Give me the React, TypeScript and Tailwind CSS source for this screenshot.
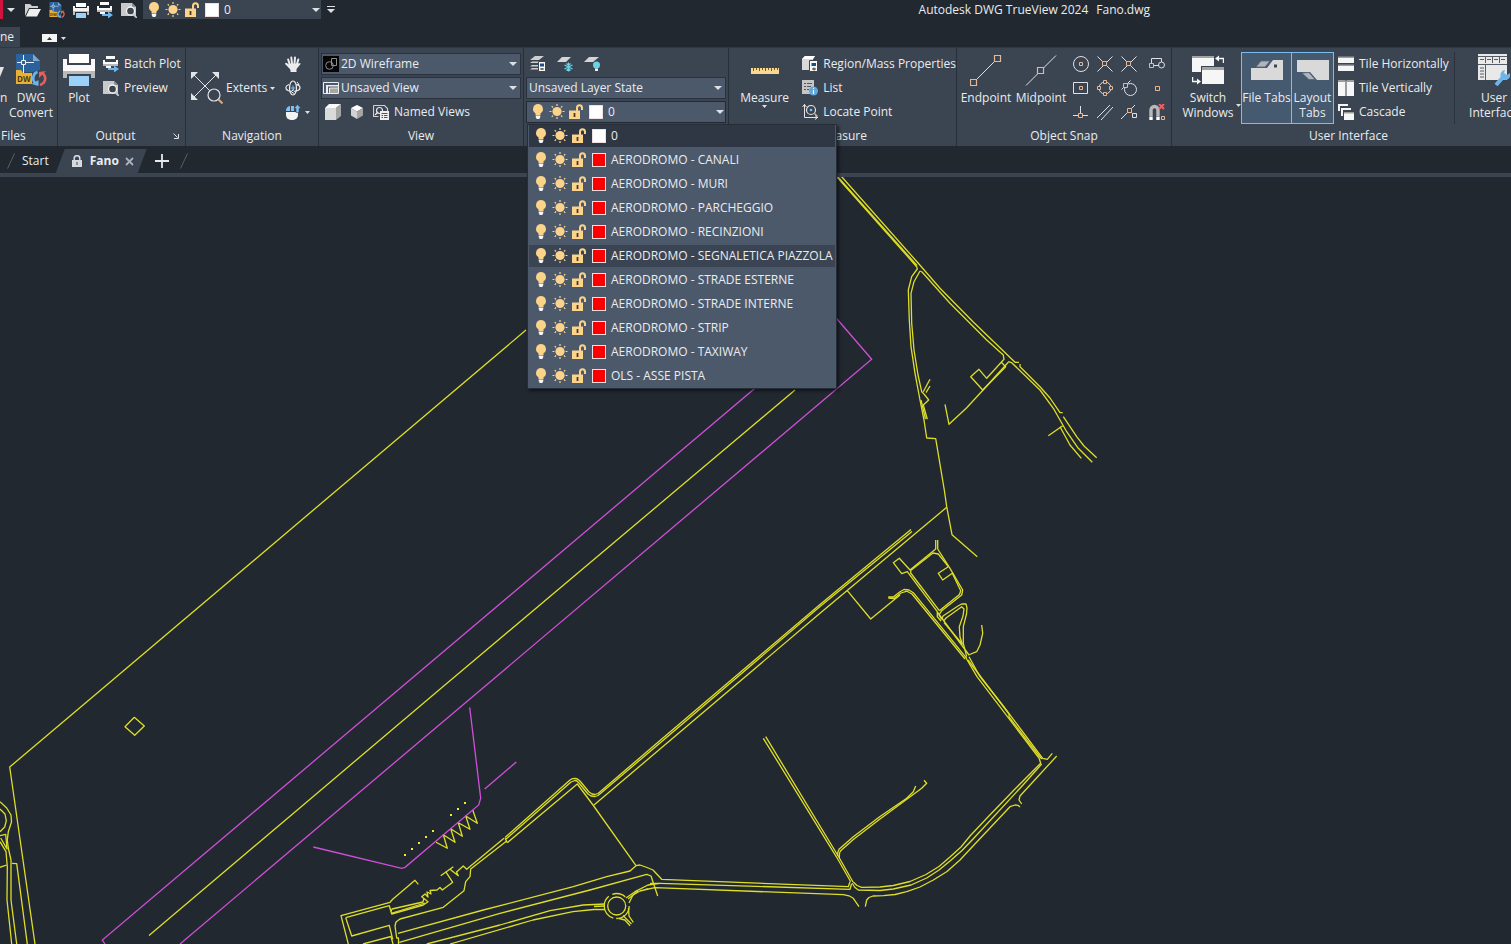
import React from "react";
import clsx from "clsx";

const yellowLines = [
  // perimeter and runway axis
  "35,944 9.7,767 89,700 526,330",
  "134.3,717.3 144.3,726 134.7,735.3 125,726.7 134.3,717.3",
  "149,935.5 300,807.7 439,690 795,390",
  // west roundabout
  "0,801.7 6.7,808 11,815 11.5,822 8.3,831.7 7.3,840 8.3,848 11,860 11,900 16.7,944",
  "0,809 5,814 6.3,820.7 4.7,827 0,831.7",
  "0,835.7 5.7,834.3 7,849 0.7,838",
  "0,841.7 6,851.7 7.3,866.7 7,900 11.7,944",
  "0,867.3 6.7,865",
  "12,863.3 16.7,863.7 27.3,944",
  // north east road
  "841.7,176.7 918.3,263.3 940,288.3 973,321.7 1015,362.3 1019,362.3",
  "1020,364 1020,366.7 1040,386.7 1050,398 1060,412.7 1062.7,412.7",
  "1063.3,416.7 1076.7,436.7 1084,446 1096.7,457.7",
  "837,177 916.7,266.7 917.3,269 911.7,276.7 908.3,290 909.3,320 911,346.7 915,373.3 920,400 924,420 926.7,438 935.7,438.7 944.3,490 946.7,506.7 952,534.7 977.3,556.7",
  "838,177 917,265.5",
  "920,271 914,281.7 911,293.3 911.7,323.3 914,350 918,375 921.7,391.7 924,394",
  "923.3,391.7 930,379.3",
  "926,392.7 930,386",
  "924,394 928.7,400 923.3,405 927.3,419.3",
  "921,400 925.5,419",
  "920,271 922,272 950,303.3 986.7,340 1003.3,355 1004,359.3 986.7,378.3 979,369.3 970.7,376.7 982.7,390 1005.7,366.7 1001.3,362.3",
  "1008.3,362.3 984,389 966.7,407.7 949,424.3 945,404.3",
  "1008,361.7 1011.7,362.7 1040,390 1053.3,408.3 1066.7,431.7 1078.3,448.3 1092.3,462.3",
  "1060,426.7 1070,445 1081.3,458.3",
  "1048.3,435.7 1062.7,425.7",
  // long parallel road
  "911,529.5 820,604.5 660,740.5 601,791 598,793.5 595,794.5 592,794 589,792 580,781 577.5,779 575,778.3 572.5,778.7 570,780 505,837.5",
  "912,531.5 820,606.5 660,743 601,793 598,795.5 595,796.5 591,796 588,794 579,783 577,781 575,780.5 571,782 505.5,839.5",
  "946.7,507.3 820,613.3 660,749 594,805",
  "847.3,590.7 870.7,619 900,595",
  "507.3,842.7 577.3,784 593,805 636,865.7",
  "505,838.3 507.3,842.7",
  // car park block
  "935.7,540 935.7,549 910,570 899.3,558.3 893.3,562.7 901.7,573.7 907.3,571.7 937.3,611.7 937.3,616.7 941,621",
  "937.7,540 937.7,549 950,568.3 962.7,590 961.7,595 941.7,610.7 939,615 941.7,619.3",
  "939.3,610.7 910.7,573 910.7,570.5 933,553 938.3,554 948.3,566.7 938.3,573.3 942.7,580 952.3,573.3 960.7,590.7 959.5,594.5 939.3,610.7",
  "941.7,619.3 943,616 958,606 961.7,604 966,604 967,608 966.5,614 963.3,626.7 963.3,643.3 966.7,656.7",
  "944,620.7 946,618 961.7,606.7 964,609 963,616 959.3,626.7 960,637 962.3,644 944,622.7",
  "888.3,597 893.3,597 900,591.7 904,589.5 909,590 913.3,592.7 966.7,658.3",
  "888.3,598 894,598.5 901,593 907,591.2 912,594 965,659",
  "937.3,612 969,655",
  "981.7,625 982.7,633.3 980,645 976.7,651.7 968.3,655",
  "966,658 977,676.7 1039,758 1040.7,763.3 1014,790 987,818 970,836 961,847 950,857 939,866.5 926,874.5 910,881.5 893.3,885.5 880,887 861.7,887.3 857,885.5 853.3,882",
  "969,656.7 980,676.7 1003.3,706 1042.7,758.3 1047.3,759.3 1052.3,753.3",
  "968,660 1009,714 1009,717 1041.7,759",
  "1041.7,764 1023,785 973.3,838.7 962,850.5 950,861 939,870 926.7,878 911,885 893.3,889 880,890.5 858.3,890 855,887.5 852,883",
  "1056.7,756 1020,796 1019,800 1021.7,804",
  "1020,807 1018,805.300 1015,805 1010,806.7 973,846 960,860 947,871.5 933.3,880 920,887 906.7,891.7 895,894.5 883.3,895.7 873,896 869,897.5 866.7,900 865.3,906.7",
  // south road
  "636,865.7 640,865 647,867.5 653,870 661.7,879.3 848.3,886.7 850,881.7",
  "650,883.3 660,883.3 850,889.3 851.5,884",
  "646,889.5 655,887.7 843.3,894.7 849,895.800 853.3,898.3 859,906.7",
  "763.3,738.3 836.7,857.3 850.7,881.7",
  "765.7,736.7 838.5,856.5 853,882",
  "837.5,856 837.8,852.5 839,849.3 853.3,836.7 880,816.5 906.7,798.3 913.3,791.7 915.7,786",
  "839.3,858 839.5,853 840.7,850.7 853.3,839.5 880,819 921.7,788.3 926.7,783.3 924,780.3",
  "636,865.7 630,871 606.7,876.7 573.3,886.7 483.3,910 398,933.3",
  "399.3,942.3 500,913.3 590,890 646.7,874.3 651,876 657.7,896",
  "426.7,944 500,925 550,910.7 583.3,905 605,904",
  "450,944 533,920 573,911.7 594,909.5 605,909.5",
  "594,906.5 605,906",
  "626,898 635,891.7 648,885 660,883.3",
  "629,903 633,895 640,891 648,889",
  "628,899 638,891",
  "619,918.5 625,920 630,925.7",
  "623,915.5 631.5,924",
  "628.5,908 629,916 633.3,922.3",
  // apron stands
  "436,842.3 447.3,848.3 443.3,834.7 455,842.3 450.7,828.7 462.3,836.3 458.3,822.7 470,829.3 465.7,816 477.3,823.3 472.7,810",
  // south west buildings
  "348.3,944 341,915.7 390,902.3 392.7,899.3 415,880.3 418.3,884.3",
  "345.7,917.7 351.7,936 389.3,925.3 392.7,939.3",
  "345.7,917.7 389.3,905.7 391.7,914 423.3,905 428,901.7 421.7,896.7 425,894 428,897 427,892 431,894 430,890.5 437,890 440,887.5 442.3,890 452.7,882.3 445.7,871.7",
  "391,911.5 392,909 423,902 424,898",
  "392,913 425,903",
  "440.7,875.7 453.3,866.7",
  "450,869.3 458.3,875.7 456.5,872 463.3,866 466.7,869.3 504,838.3",
  "507,840.7 470.7,869 470,876.7 465.7,881.7 464,890.7 443.3,907.3 400,919 396,922 395,926 396.7,938 398.5,938 398.5,944",
  "363,944 391,936.5 393,944",
];

const magentaLines = [
  "105,944 102.3,940 837,319 871.7,359.3 180,944",
  "469.7,707.3 480.7,798.3 478.7,805 405,867.3 401.7,868.3 313.3,847",
  "484.7,789 516.3,762",
];

const standMarks = [
  [405, 855],
  [412, 849],
  [419, 843],
  [426, 837],
  [433, 831],
  [451, 815],
  [458, 809],
  [465, 803],
];

const layers = [
  { name: "0", color: "bg-white" },
  { name: "AERODROMO - CANALI", color: "bg-[#fb0000]" },
  { name: "AERODROMO - MURI", color: "bg-[#fb0000]" },
  { name: "AERODROMO - PARCHEGGIO", color: "bg-[#fb0000]" },
  { name: "AERODROMO - RECINZIONI", color: "bg-[#fb0000]" },
  { name: "AERODROMO - SEGNALETICA PIAZZOLA", color: "bg-[#fb0000]" },
  { name: "AERODROMO - STRADE ESTERNE", color: "bg-[#fb0000]" },
  { name: "AERODROMO - STRADE INTERNE", color: "bg-[#fb0000]" },
  { name: "AERODROMO - STRIP", color: "bg-[#fb0000]" },
  { name: "AERODROMO - TAXIWAY", color: "bg-[#fb0000]" },
  { name: "OLS - ASSE PISTA", color: "bg-[#fb0000]" },
];

type IconProps = { children: React.ReactNode; size?: number; className?: string };

const Icon = ({ children, size = 16, className }: IconProps) => (
  <svg
    width={size}
    height={size}
    viewBox={`0 0 ${size} ${size}`}
    fill="none"
    aria-hidden="true"
    className={clsx("shrink-0", className)}
  >
    {children}
  </svg>
);

const Caret = ({ small }: { small?: boolean }) => (
  <svg width={small ? 5 : 8} height={small ? 3 : 4} viewBox="0 0 8 4" preserveAspectRatio="none" aria-hidden="true" className="shrink-0">
    <path d="M0 0h8L4 4z" fill="#dde1e6" />
  </svg>
);

const BulbIcon = () => (
  <Icon>
    <path d="M8 0a5 5 0 0 0-2.500 9.300V11h5V9.300A5 5 0 0 0 8 0z" fill="#fbd38a" />
    <path d="M5.700 11.500h4.600V13L9.300 15H6.700L5.700 13z" fill="#f4f7fa" />
  </Icon>
);

const SunIcon = () => (
  <Icon>
    <circle cx="8" cy="7.500" r="4.600" fill="#fbd38a" />
    <path
      d="M8 0v2M8 13v2M.5 7.500h2M13.500 7.500h2M2.700 2.200 4 3.500M12 11.500l1.300 1.300M2.700 12.800 4 11.500M12 3.500l1.300-1.300"
      stroke="#fbd38a"
      strokeWidth="1.200"
    />
  </Icon>
);

const UnlockIcon = () => (
  <Icon>
    <path d="M1 6.500h11V15H1z" fill="#fbd38a" />
    <path d="M9 7V3.700a2.500 2.500 0 0 1 5 0V6" stroke="#fbd38a" strokeWidth="2" />
    <path d="M6.500 9v4" stroke="#4a3c22" strokeWidth="1.800" />
  </Icon>
);

const PrinterIcon = () => (
  <Icon>
    <path d="M3 1h10v4H3z" fill="#fff" />
    <path d="M0 4h2v2h12V4h2v5H0z" fill="#f2f2f2" />
    <path d="M0 9h16v4h-2v-3H2v3H0z" fill="#bdbdbd" />
    <path d="M3 11h10v5H3z" fill="#9ad2fa" />
  </Icon>
);

const BigPrinterIcon = () => (
  <Icon size={32}>
    <path d="M6 0h20v9H6z" fill="#fff" />
    <path d="M0 5h4v6h24V5h4v12H0z" fill="#fafafa" />
    <path d="M0 17h32v7h-4v-4H4v4H0z" fill="#b9b9b9" />
    <path d="M6 22h20v10H6z" fill="#9ad2fa" />
  </Icon>
);

const BatchPlotIcon = () => (
  <Icon>
    <path d="M3 0h9v3H3zM0 4h2v2h11V4h2v4H0z" fill="#fafafa" />
    <path d="M0 8h15v2H0z" fill="#b9b9b9" />
    <path d="M3 10h5v2H3z" fill="#fafafa" />
    <path d="M5 12h6V9.500l5 3.500-5 3.500V14H5z" fill="#6db4ea" />
  </Icon>
);

const PreviewIcon = () => (
  <Icon>
    <path d="M0 1h11l4 4v9H0z" fill="#c9c9c9" />
    <path d="M11 1v4h4" fill="#8b8f94" />
    <circle cx="9.500" cy="9" r="4" fill="#3b4451" stroke="#f4f4f4" strokeWidth="1.300" />
    <path d="m12 12 4 4" stroke="#c9c9c9" strokeWidth="1.800" />
  </Icon>
);

const OpenIcon = () => (
  <Icon>
    <path d="M0 14V2h5l2 2h6v2H4z" fill="#cfcfcf" />
    <path d="M4.500 7H16l-4 7.500H.8z" fill="#efefef" />
  </Icon>
);

const DwgIcon = ({ size = 32 }: { size?: number }) => (
  <svg width={size} height={size} viewBox="0 0 32 32" fill="none" aria-hidden="true" className="shrink-0">
    <path d="M1 0h17l7 7v11H1z" fill="#2c629b" />
    <path d="M18 0v7h7z" fill="#7fa6cc" />
    <path d="M8.500 1v19M2 8.500h17" stroke="#e8f1fa" />
    <path d="M6.500 6.500h4v4h-4z" fill="#2c629b" stroke="#e8f1fa" />
    <path d="M1 16h5l2 3h13v11H1z" fill="#e9b036" />
    <text x="2" y="28" fontSize="8" fontWeight="700" fill="#4c3a12" fontFamily="Open Sans, sans-serif">
      DW
    </text>
    <path d="M17 30V18l8-2v15z" fill="#3b4451" />
    <path d="M22.500 18c-4 1-6 7-2.500 11" stroke="#6db4ea" strokeWidth="2.600" />
    <path d="m16.500 30 7-4v6z" fill="#6db4ea" />
    <path d="M25 31c6-2 7-9 2-12" stroke="#e2605f" strokeWidth="2.600" />
    <path d="m31 17-7 1v6z" fill="#e2605f" />
  </svg>
);

const ExtentsIcon = () => (
  <Icon size={32}>
    <path d="M2 2l20 20M26 2 2 26" stroke="#e1e4e8" />
    <path d="M0 0h7L0 7zM28 0v7l-7-7zM0 28v-7l7 7z" fill="#e1e4e8" />
    <circle cx="23" cy="23" r="6" fill="#3b4451" stroke="#e1e4e8" strokeWidth="1.200" />
    <path d="m27.500 27.500 4 4" stroke="#d3ae83" strokeWidth="2" />
  </Icon>
);

const PanIcon = () => (
  <Icon>
    <path
      d="M4.700 8.500 3.200 3.500M7 7.500 6.300 1.500M9.500 7.500l.5-6M11.800 8.500l1.500-5M4.500 11 1.200 7.700"
      stroke="#ececec"
      strokeWidth="2"
      strokeLinecap="round"
    />
    <path d="M3.800 7.500h9c1-.2 2-.5 3 .3L11.500 13v3h-6v-2L3 10.500z" fill="#ececec" />
  </Icon>
);

const OrbitIcon = () => (
  <Icon>
    <ellipse cx="8" cy="8" rx="3.500" ry="7" stroke="#ececec" strokeWidth="1.200" />
    <path d="M4 4.500C0 6 0 9 3 10.500l3 1M12 4.500c4 1.500 4 5 0 6.200l-3 .8" stroke="#ececec" strokeWidth="1.200" />
    <path d="M8 5.500v5M5.500 8h5" stroke="#7cc0f5" />
    <path d="m9 9.500-3 2 3 2M12 2l2 2.500-3 .5" stroke="#ececec" />
  </Icon>
);

const WheelIcon = () => (
  <Icon>
    <path d="M1 8h12v3a5 5 0 0 1-5 5H6a5 5 0 0 1-5-5z" fill="#f3f3f3" />
    <path d="M1 7a5 5 0 0 1 4-5v5zM6 2h3v5H6z" fill="#7cc0f5" />
    <path d="M11 8.500V4.500H9L12.500.5 16 4.500h-2v4z" fill="#7cc0f5" stroke="#3b4451" strokeWidth=".6" />
  </Icon>
);

const WireframeIcon = () => (
  <Icon>
    <path d="M0 0h16v16H0z" fill="#050505" />
    <circle cx="6.500" cy="9.500" r="3.800" stroke="#8e8e8e" />
    <path d="M8.500 2.500h5v7h-5z" stroke="#8e8e8e" />
  </Icon>
);

const ViewFrameIcon = () => (
  <Icon>
    <path d="M.5 2.500h15v11H.5z" stroke="#eee" />
    <path d="M3 5h12v1.500H5V13H3z" fill="#eee" />
    <path d="M6.500 8h8.500v5H6.500z" fill="#aaa69d" />
    <path d="M6.500 13V8H15" stroke="#eee" />
  </Icon>
);

const CubeIcon = () => (
  <Icon>
    <path d="M0 4h11v12H0z" fill="#dadada" />
    <path d="M0 4 4 0h12l-5 4z" fill="#fafafa" />
    <path d="m11 4 5-4v12l-5 4z" fill="#a5a5a5" />
  </Icon>
);

const IsoCubeIcon = () => (
  <Icon>
    <path d="m8 1 6 3-6 3.500L2 4z" fill="#fff" />
    <path d="m2 4 6 3.500V15l-6-3.500z" fill="#d2d2d2" />
    <path d="m14 4-6 3.500V15l6-3.500z" fill="#a5a5a5" />
  </Icon>
);

const NamedViewsIcon = () => (
  <Icon>
    <path d="M.5 1.500h11l3 3v3M.5 1.500v11h5" stroke="#d0d0d0" strokeWidth="1.200" />
    <circle cx="6.500" cy="6.500" r="3" stroke="#e6e6e6" strokeWidth="1.200" />
    <path d="m2 11 3-3" stroke="#e6e6e6" strokeWidth="1.200" />
    <path d="M7 7h9v9H7z" fill="#f0f0f0" />
    <path d="M8.500 9.500h6M8.500 11.500H10M11 11.500h3.500M8.500 13.500H10M11 13.500h3.500" stroke="#555" />
  </Icon>
);

const LayerPropertiesIcon = () => (
  <Icon>
    <path d="M5 0h9L9 4H0zM2 5.500h7V7H0zM2 9h6v1.500H0zM2 12h6v1.500H0z" fill="#cfcfcf" />
    <path d="M8.500 5.500h7v10h-7z" fill="#fafafa" stroke="#3b4451" />
    <path d="M10 7.500h4v3h-4z" fill="#1d4e7d" />
    <path d="M10 13h4M12 12v2" stroke="#444" />
  </Icon>
);

const LayerFreezeIcon = () => (
  <Icon>
    <path d="M5 1h9L9 6H0z" fill="#d5d5d5" />
    <path d="M11.500 6.500v9M7.500 9l8 4M15.500 9l-8 4M9.500 7.500l2 2 2-2M9.500 14.500l2-2 2 2" stroke="#69d3e6" strokeWidth="1.200" />
  </Icon>
);

const LayerOffIcon = () => (
  <Icon>
    <path d="M5 1h10L9 6H0z" fill="#d5d5d5" />
    <circle cx="12.500" cy="9" r="3.500" fill="#69d3e6" />
    <path d="M11 12.500h3V15h-3z" fill="#f3f3f3" />
  </Icon>
);

const RulerIcon = () => (
  <Icon size={32}>
    <path d="M2 14h28v6H2z" fill="#f9d692" />
    <path d="M4.500 14v3M7.500 14v2M10.500 14v3M13.500 14v2M16.500 14v3M19.500 14v2M22.500 14v3M25.500 14v2M28.500 14v2" stroke="#6e5a34" />
  </Icon>
);

const RegionIcon = () => (
  <Icon>
    <path d="M0 3 3 0h10L11 3v11H0z" fill="#d9d9d9" />
    <path d="M0 3 3 0h10l-2 3z" fill="#fff" />
    <path d="M7.500 4.500h8v11h-8z" fill="#fafafa" stroke="#3b4451" />
    <path d="M9.500 7h4.500v3H9.500z" fill="#1d4e7d" />
    <path d="M10 13h4M12 11.500v3" stroke="#333" />
  </Icon>
);

const ListIcon = () => (
  <Icon>
    <path d="M0 0h12v14H0z" fill="#c6c6c6" />
    <path d="M2 3.500h2M5 3.500h5M2 6.500h2M5 6.500h4M2 9.500h2M5 9.500h2" stroke="#50565e" />
    <circle cx="11.500" cy="11" r="4.500" fill="#5fa8dc" />
    <path d="M11.500 10v4M11.500 7.800v1.200" stroke="#fff" strokeWidth="1.200" />
  </Icon>
);

const LocateIcon = () => (
  <Icon>
    <path d="M2.500 0v13.500H16" stroke="#e3e3e3" />
    <path d="M.5 3l2-2.500 2 2.500M13 11.500l2.500 2-2.500 2" stroke="#e3e3e3" />
    <circle cx="9" cy="6" r="4.500" stroke="#e3e3e3" strokeWidth="1.200" />
    <circle cx="9" cy="6" r="1.300" fill="#7cc0f5" />
    <path d="m12.500 9.500 3 3" stroke="#d3ae83" strokeWidth="1.500" />
  </Icon>
);

const snapBox = "#e8b68f";
const snapLine = "#dde1e6";

const EndpointIcon = () => (
  <Icon size={32}>
    <path d="M5 27 27 5" stroke={snapLine} />
    <path d="M24.500 1.500h6v6h-6zM.5 25.500h6v6h-6z" fill="#3b4451" stroke={snapBox} strokeWidth="1.200" />
  </Icon>
);

const MidpointIcon = () => (
  <Icon size={32}>
    <path d="M1 31.500 31 1.500" stroke={snapLine} />
    <path d="M12.500 13.500h6v6h-6z" fill="#3b4451" stroke={snapBox} strokeWidth="1.200" />
  </Icon>
);

const snaps: { label: string; art: React.ReactNode }[] = [
  {
    label: "Center",
    art: (
      <>
        <circle cx="8" cy="8" r="7.500" stroke={snapLine} />
        <path d="M6.500 6.500h3v3h-3z" stroke={snapBox} />
      </>
    ),
  },
  {
    label: "Intersection",
    art: (
      <>
        <path d="m.5.5 15 15M15.500.5l-15 15" stroke={snapLine} />
        <path d="M5.500 5.500h4v4h-4z" fill="#3b4451" stroke={snapBox} />
      </>
    ),
  },
  {
    label: "Apparent Intersection",
    art: (
      <>
        <path d="m.5.5 15 15M15.500.5l-15 15" stroke={snapLine} />
        <path d="M5.500 5.500h4v4h-4z" fill="#3b4451" stroke={snapBox} />
      </>
    ),
  },
  {
    label: "Insertion",
    art: (
      <>
        <path d="M2.500 7V2.500h10V6M5 9.500h5" stroke={snapLine} />
        <circle cx="12.500" cy="9" r="3" stroke={snapLine} />
        <path d="M.5 7.500h4v4h-4z" stroke={snapBox} />
      </>
    ),
  },
  {
    label: "Geometric Center",
    art: (
      <>
        <path d="M.5 2.500h14v11H.5z" stroke={snapLine} />
        <path d="M6.500 6.500h3v3h-3z" stroke={snapBox} />
      </>
    ),
  },
  {
    label: "Quadrant",
    art: (
      <>
        <circle cx="8" cy="8" r="6" stroke={snapLine} />
        <path d="M6.500.5h3v3h-3zM6.500 12.500h3v3h-3zM.5 6.500h3v3h-3zM12.500 6.500h3v3h-3z" fill="#3b4451" stroke={snapBox} />
      </>
    ),
  },
  {
    label: "Tangent",
    art: (
      <>
        <path d="M.5 9.500 9.500.5" stroke={snapLine} />
        <circle cx="9.500" cy="9.500" r="6" stroke={snapLine} />
        <path d="M2.500 3.500h4v4h-4z" fill="#3b4451" stroke={snapBox} />
      </>
    ),
  },
  { label: "Node", art: <path d="M6.500 6.500h4v4h-4z" stroke={snapBox} /> },
  {
    label: "Perpendicular",
    art: (
      <>
        <path d="M7.500 2v10M0 11.500h15" stroke={snapLine} />
        <path d="M5.500 9.500h4v4h-4z" fill="#3b4451" stroke={snapBox} />
      </>
    ),
  },
  { label: "Parallel", art: <path d="M0 14 13 1M4 16 16 3" stroke={snapLine} /> },
  {
    label: "Nearest",
    art: (
      <>
        <path d="M0 15 14 1M8 6l4 4" stroke={snapLine} />
        <path d="M6.500 4.500h4v4h-4z" fill="#3b4451" stroke={snapBox} />
        <path d="M11.500 9.500h4v4h-4z" fill="#3b4451" stroke={snapLine} />
      </>
    ),
  },
  {
    label: "None",
    art: (
      <>
        <path d="M2 12V6a3.500 3.500 0 0 1 7 0v6" stroke="#b9b9b9" strokeWidth="3.400" />
        <path d="M.3 12.500h3.400V16H.3zM7.300 12.500h3.400V16H7.300z" fill="#fff" />
        <path d="m10 0 5 5m0-5-5 5" stroke="#f0605f" strokeWidth="2" />
        <path d="M12.500 12.500h3v3h-3z" stroke={snapBox} />
      </>
    ),
  },
];

const SwitchWindowsIcon = () => (
  <Icon size={32}>
    <path d="M0 2h22v16H0z" fill="#f6f6f6" />
    <path d="M0 2h22v2H0z" fill="#a3a3a3" />
    <path d="M9 12h24v19H9z" fill="#3b4451" />
    <path d="M10 13h22v17H10z" fill="#f6f6f6" />
    <path d="M10 13h22v3H10z" fill="#a3a3a3" />
    <path d="M31.500 9V4.500H26M.5 23v4.500H6" stroke="#f6f6f6" strokeWidth="1.500" />
    <path d="m23 4.500 4-3v6zM9 27.500l-4-3v6z" fill="#f6f6f6" />
  </Icon>
);

const FileTabsIcon = () => (
  <Icon size={32}>
    <path d="M0 14h16l6-8h10v20H0z" fill="#d9d9d9" />
    <path d="m5 13 5-6h9l-5 6z" fill="#b1b4b8" stroke="#56687d" strokeWidth=".8" />
    <path d="M23 10.500h3v3h-3z" fill="#3c4653" />
  </Icon>
);

const LayoutTabsIcon = () => (
  <Icon size={32}>
    <path d="M0 6h32v20H20l-7-8H0z" fill="#d9d9d9" />
    <path d="m5 19 7-.5 6 7h-6z" fill="#b1b4b8" stroke="#56687d" strokeWidth=".8" />
  </Icon>
);

const TileHIcon = () => (
  <Icon>
    <path d="M0 1h16v6H0zM0 9h16v6H0z" fill="#f6f6f6" />
    <path d="M0 .5h16V2H0zM0 8.500h16V10H0z" fill="#9c9c9c" />
  </Icon>
);

const TileVIcon = () => (
  <Icon>
    <path d="M0 1h7.500v15H0zM8.500 1H16v15H8.500z" fill="#f6f6f6" />
    <path d="M0 0h7.500v2H0zM8.500 0H16v2H8.500z" fill="#9c9c9c" />
  </Icon>
);

const CascadeIcon = () => (
  <Icon>
    <path d="M0 0h10v2H2v5H0zM3 4h10v2H5v6H3z" fill="#f6f6f6" />
    <path d="M6 8h10v8H6z" fill="#f6f6f6" />
    <path d="M6 8h10v1.500H6z" fill="#9c9c9c" />
  </Icon>
);

const UserInterfaceIcon = () => (
  <Icon size={32}>
    <path d="M0 0h29v26H0z" fill="#e9e9e9" />
    <path d="M0 2.500h29" stroke="#555c66" />
    <path d="M7.500 3v6M14.500 3v6M21.500 3v6M0 10.500h29M7.500 11v15M2 5.500h4M9 5.500h4M16 5.500h4M23 5.500h4M2 14h4M2 17h4M2 20h4M2 23h4" stroke="#555c66" />
    <path d="m18 31 8-9" stroke="#6db4ea" strokeWidth="4" />
    <path d="M32 19a5 5 0 1 1-5-3l-1 3 3 2z" fill="#6db4ea" />
  </Icon>
);

const Panel = ({
  title,
  className,
  launcher,
  children,
}: {
  title: string;
  className?: string;
  launcher?: boolean;
  children: React.ReactNode;
}) => (
  <section className={clsx("flex shrink-0 flex-col border-r border-[#272e37] pt-1", className)}>
    <div className="flex h-[72px]">{children}</div>
    <div className="flex h-[22px] items-center pt-0.5">
      <h2 className="flex-1 text-center leading-5">{title}</h2>
      {launcher && (
        <button aria-label={`${title} settings`} className="w-3">
          <svg width="6" height="6" viewBox="0 0 6 6" fill="none" aria-hidden="true">
            <path d="m.5.5 4 4M5.500 1v4.500H1" stroke="#dde1e6" />
          </svg>
        </button>
      )}
    </div>
  </section>
);

const BigButton = ({
  icon,
  lines,
  className,
  pressed,
}: {
  icon: React.ReactNode;
  lines: string[];
  className?: string;
  pressed?: boolean;
}) => (
  <button
    aria-pressed={pressed}
    className={clsx(
      "flex shrink-0 flex-col items-center whitespace-nowrap",
      pressed ? "border border-[#7cbcf0] bg-[#45596f] pt-px" : "pt-0.5",
      className
    )}
  >
    {icon}
    <span className="mt-1 flex flex-col items-center leading-[15px]">
      {lines.map((line) => (
        <span key={line}>{line}</span>
      ))}
    </span>
  </button>
);

const RowButton = ({ icon, label }: { icon: React.ReactNode; label: string }) => (
  <button className="flex h-6 items-center gap-[5px] whitespace-nowrap">
    {icon}
    {label}
  </button>
);

const IconButton = ({ label, children }: { label: string; children: React.ReactNode }) => (
  <button aria-label={label} className="flex h-6 w-6 shrink-0 items-center justify-center">
    {children}
  </button>
);

const RibbonSelect = ({ label, value, icon }: { label: string; value: string; icon?: React.ReactNode }) => (
  <div className="flex h-6 items-center">
    <div className="relative flex h-[22px] w-full items-center border border-[#2b323d] bg-[#4c596b]">
      {icon && <span className="pointer-events-none absolute left-px">{icon}</span>}
      <select
        aria-label={label}
        defaultValue={value}
        className={clsx("h-full w-full appearance-none outline-none", icon ? "pl-[19px]" : "pl-[2px]")}
      >
        <option>{value}</option>
      </select>
      <span className="pointer-events-none absolute right-[3px]">
        <Caret />
      </span>
    </div>
  </div>
);

const LayerRow = ({ name, color }: { name: string; color: string }) => (
  <>
    <span className="flex gap-[3px]">
      <BulbIcon />
      <SunIcon />
      <UnlockIcon />
    </span>
    <span className={clsx("mr-[5px] ml-[5px] h-[14px] w-[14px] shrink-0 border border-[#f3dede]", color)} />
    <span className="whitespace-nowrap">{name}</span>
  </>
);

const LayerMenu = () => (
  <ul
    role="listbox"
    aria-label="Layers"
    className="absolute top-[76px] left-[3px] z-10 flex w-[310px] flex-col gap-0.5 border border-[#262d37] bg-[#4c596b] px-px pb-px shadow-[2px_2px_3px_rgba(0,0,0,0.5)]"
  >
    {layers.map((layer, i) => (
      <li
        key={layer.name}
        role="option"
        aria-selected={i === 0}
        className={clsx(
          "flex h-[22px] items-center pl-1",
          i === 0 && "bg-[#2f3744]",
          i === 5 && "bg-[#3b4452]"
        )}
      >
        <LayerRow {...layer} />
      </li>
    ))}
  </ul>
);

const TitleBar = () => (
  <header className="flex h-[19px] items-center">
    <span className="h-full w-[3px] bg-[#d3123f]" />
    <button aria-label="Application menu" className="flex w-4 justify-center">
      <Caret />
    </button>
    <div className="flex pl-0.5">
      <IconButton label="Open">
        <OpenIcon />
      </IconButton>
      <IconButton label="DWG Convert">
        <DwgIcon size={16} />
      </IconButton>
      <IconButton label="Plot">
        <PrinterIcon />
      </IconButton>
      <IconButton label="Batch Plot">
        <BatchPlotIcon />
      </IconButton>
      <IconButton label="Preview">
        <PreviewIcon />
      </IconButton>
    </div>
    <button aria-label="Current layer" className="ml-0.5 flex h-full w-[178px] items-center bg-[#3b4451] pl-[3px]">
      <LayerRow name="0" color="bg-white" />
      <span className="mr-px ml-auto">
        <Caret />
      </span>
    </button>
    <button aria-label="Customize toolbar" className="flex w-5 flex-col items-center gap-0.5">
      <span className="h-px w-2 bg-[#dde1e6]" />
      <Caret />
    </button>
    <span className="grow-8" />
    <h1 className="flex gap-2 whitespace-nowrap">
      <span>Autodesk DWG TrueView 2024</span>
      <span>Fano.dwg</span>
    </h1>
    <span className="grow-5" />
  </header>
);

const RibbonTabs = () => (
  <nav className="flex h-7 items-end">
    <button className="h-5 w-5 bg-[#3b4451] text-left">ne</button>
    <button aria-label="Minimize ribbon" className="mb-[5px] ml-[22px] flex h-2 w-[15px] items-center justify-center bg-[#f5f5f5]">
      <svg width="5" height="3" viewBox="0 0 5 3" aria-hidden="true">
        <path d="M0 3h5L2.500 0z" fill="#333" />
      </svg>
    </button>
    <button aria-label="Ribbon options" className="mb-[7px] ml-1">
      <Caret small />
    </button>
  </nav>
);

const Ribbon = () => (
  <div className="flex h-[99px] border-t border-[#2f3742] bg-[#3b4451]">
    <section className="flex w-[58px] shrink-0 flex-col border-r border-[#272e37] pt-1">
      <div className="flex h-[72px]">
        <button className="flex w-2 flex-col items-start">
          <svg width="4" height="34" viewBox="0 0 4 34" aria-hidden="true">
            <path d="M0 15h4L0 25z" fill="#e3e3e3" />
          </svg>
          <span className="mt-1 leading-[15px]">n</span>
        </button>
        <BigButton icon={<DwgIcon />} lines={["DWG", "Convert"]} className="w-[46px]" />
      </div>
      <h2 className="h-[22px] pt-0.5 pl-px leading-5">Files</h2>
    </section>

    <Panel title="Output" launcher className="w-[128px]">
      <BigButton icon={<BigPrinterIcon />} lines={["Plot"]} className="w-[42px]" />
      <div className="flex flex-col pl-[3px]">
        <RowButton icon={<BatchPlotIcon />} label="Batch Plot" />
        <RowButton icon={<PreviewIcon />} label="Preview" />
      </div>
    </Panel>

    <Panel title="Navigation" className="w-[133px]">
      <button className="flex items-center gap-[3px] pl-[5px]">
        <ExtentsIcon />
        Extents
        <Caret small />
      </button>
      <div className="flex flex-col pl-1.5">
        <IconButton label="Pan">
          <PanIcon />
        </IconButton>
        <IconButton label="Orbit">
          <OrbitIcon />
        </IconButton>
        <div className="flex items-center">
          <IconButton label="Steering wheel">
            <WheelIcon />
          </IconButton>
          <Caret small />
        </div>
      </div>
    </Panel>

    <Panel title="View" className="w-[205px]">
      <div className="flex flex-1 flex-col px-0.5">
        <RibbonSelect label="Visual style" value="2D Wireframe" icon={<WireframeIcon />} />
        <RibbonSelect label="Saved view" value="Unsaved View" icon={<ViewFrameIcon />} />
        <div className="flex">
          <IconButton label="Top view">
            <CubeIcon />
          </IconButton>
          <IconButton label="Isometric view">
            <IsoCubeIcon />
          </IconButton>
          <div className="pl-1">
            <RowButton icon={<NamedViewsIcon />} label="Named Views" />
          </div>
        </div>
      </div>
    </Panel>

    <section className="relative flex w-[205px] shrink-0 flex-col border-r border-[#272e37] px-0.5 pt-1">
      <div className="flex gap-[3px]">
        <IconButton label="Layer properties">
          <LayerPropertiesIcon />
        </IconButton>
        <IconButton label="Freeze layer">
          <LayerFreezeIcon />
        </IconButton>
        <IconButton label="Turn layer off">
          <LayerOffIcon />
        </IconButton>
      </div>
      <RibbonSelect label="Layer state" value="Unsaved Layer State" />
      <div className="flex h-6 items-center">
        <button
          aria-label="Layer"
          aria-haspopup="listbox"
          aria-expanded="true"
          className="flex h-[22px] w-full items-center border border-[#232a33] bg-[#4c596b] pl-[3px]"
        >
          <LayerRow name="0" color="bg-white" />
          <span className="mr-px ml-auto">
            <Caret />
          </span>
        </button>
      </div>
      <LayerMenu />
    </section>

    <Panel title="Measure" className="w-[228px]">
      <div className="flex w-[72px] flex-col items-center">
        <BigButton icon={<RulerIcon />} lines={["Measure"]} />
        <Caret small />
      </div>
      <div className="flex flex-col pl-0.5">
        <RowButton icon={<RegionIcon />} label="Region/Mass Properties" />
        <RowButton icon={<ListIcon />} label="List" />
        <RowButton icon={<LocateIcon />} label="Locate Point" />
      </div>
    </Panel>

    <Panel title="Object Snap" className="w-[215px]">
      <BigButton icon={<EndpointIcon />} lines={["Endpoint"]} className="w-[58px]" />
      <BigButton icon={<MidpointIcon />} lines={["Midpoint"]} className="w-[52px]" />
      <div className="grid grid-cols-[24px_24px_28px_24px] pl-0.5">
        {snaps.map((snap) => (
          <IconButton key={snap.label} label={snap.label}>
            <Icon>{snap.art}</Icon>
          </IconButton>
        ))}
      </div>
    </Panel>

    <Panel title="User Interface" className="w-[354px]">
      <div className="flex w-[69px] shrink-0 pl-2">
        <BigButton icon={<SwitchWindowsIcon />} lines={["Switch", "Windows"]} className="w-14" />
        <span className="mt-[52px]">
          <Caret small />
        </span>
      </div>
      <BigButton icon={<FileTabsIcon />} lines={["File Tabs"]} className="w-[51px]" pressed />
      <BigButton icon={<LayoutTabsIcon />} lines={["Layout", "Tabs"]} className="-ml-px w-[43px]" pressed />
      <div className="flex w-[121px] shrink-0 flex-col border-r border-[#2b323d] pl-1">
        <RowButton icon={<TileHIcon />} label="Tile Horizontally" />
        <RowButton icon={<TileVIcon />} label="Tile Vertically" />
        <RowButton icon={<CascadeIcon />} label="Cascade" />
      </div>
      <BigButton icon={<UserInterfaceIcon />} lines={["User", "Interface"]} className="w-[78px]" />
    </Panel>
  </div>
);

const Slash = () => (
  <svg width="8" height="16" viewBox="0 0 8 16" aria-hidden="true">
    <path d="M.5 15.500 7.500.5" stroke="#56606d" />
  </svg>
);

const FileTabs = () => (
  <nav className="flex h-[31px] items-end border-b-4 border-[#3b4451]">
    <div className="flex h-6 items-center pl-[7px]">
      <Slash />
      <button className="pl-[7px]">Start</button>
    </div>
    <div className="ml-[7px] flex h-6 w-[91px] items-center bg-[#3b4451] pl-4 [clip-path:polygon(9px_0,100%_0,calc(100%-9px)_100%,0_100%)]">
      <svg width="10" height="12" viewBox="0 0 10 12" fill="none" aria-hidden="true">
        <path d="M0 5h10v7H0z" fill="#d6d9dd" />
        <path d="M2.200 5V3.500a2.800 2.800 0 0 1 5.600 0V5" stroke="#d6d9dd" strokeWidth="1.500" />
        <path d="M5 7v3" stroke="#3b4451" />
      </svg>
      <button className="ml-2 font-bold">Fano</button>
      <button aria-label="Close Fano" className="ml-1.5">
        <svg width="9" height="9" viewBox="0 0 9 9" aria-hidden="true">
          <path d="m1 1 7 7M8 1 1 8" stroke="#a9b0b8" strokeWidth="1.800" />
        </svg>
      </button>
    </div>
    <div className="flex h-6 items-center pl-2">
      <button aria-label="New tab">
        <svg width="14" height="14" viewBox="0 0 14 14" aria-hidden="true">
          <path d="M7 0v14M0 7h14" stroke="#e6e9ec" strokeWidth="1.800" />
        </svg>
      </button>
      <span className="pl-[11px]">
        <Slash />
      </span>
    </div>
  </nav>
);

const Drawing = () => (
  <svg
    viewBox="0 177 1511 767"
    preserveAspectRatio="xMinYMin slice"
    fill="none"
    role="img"
    aria-label="Airfield drawing"
    className="block w-full flex-1"
  >
    <g stroke="#dede28" strokeWidth="1.300" strokeLinejoin="round">
      {yellowLines.map((points) => (
        <polyline key={points} points={points} />
      ))}
      <circle cx="616.700" cy="906" r="9" />
      <circle cx="616.700" cy="906" r="12.500" strokeDasharray="20 3 27 4 14 11" />
    </g>
    <g fill="#eeee30">
      {standMarks.map(([x, y]) => (
        <rect key={x} x={x - 1} y={y - 1} width="2" height="2" />
      ))}
    </g>
    <g stroke="#cf4fd6" strokeWidth="1.300">
      {magentaLines.map((points) => (
        <polyline key={points} points={points} />
      ))}
    </g>
  </svg>
);

export default function App() {
  return (
    <div className="flex min-h-screen flex-col overflow-hidden bg-[#212830] font-['Open_Sans','Noto_Sans',sans-serif] text-[12px] text-[#e9ecef]">
      <TitleBar />
      <RibbonTabs />
      <Ribbon />
      <FileTabs />
      <main className="flex flex-1">
        <Drawing />
      </main>
    </div>
  );
}
